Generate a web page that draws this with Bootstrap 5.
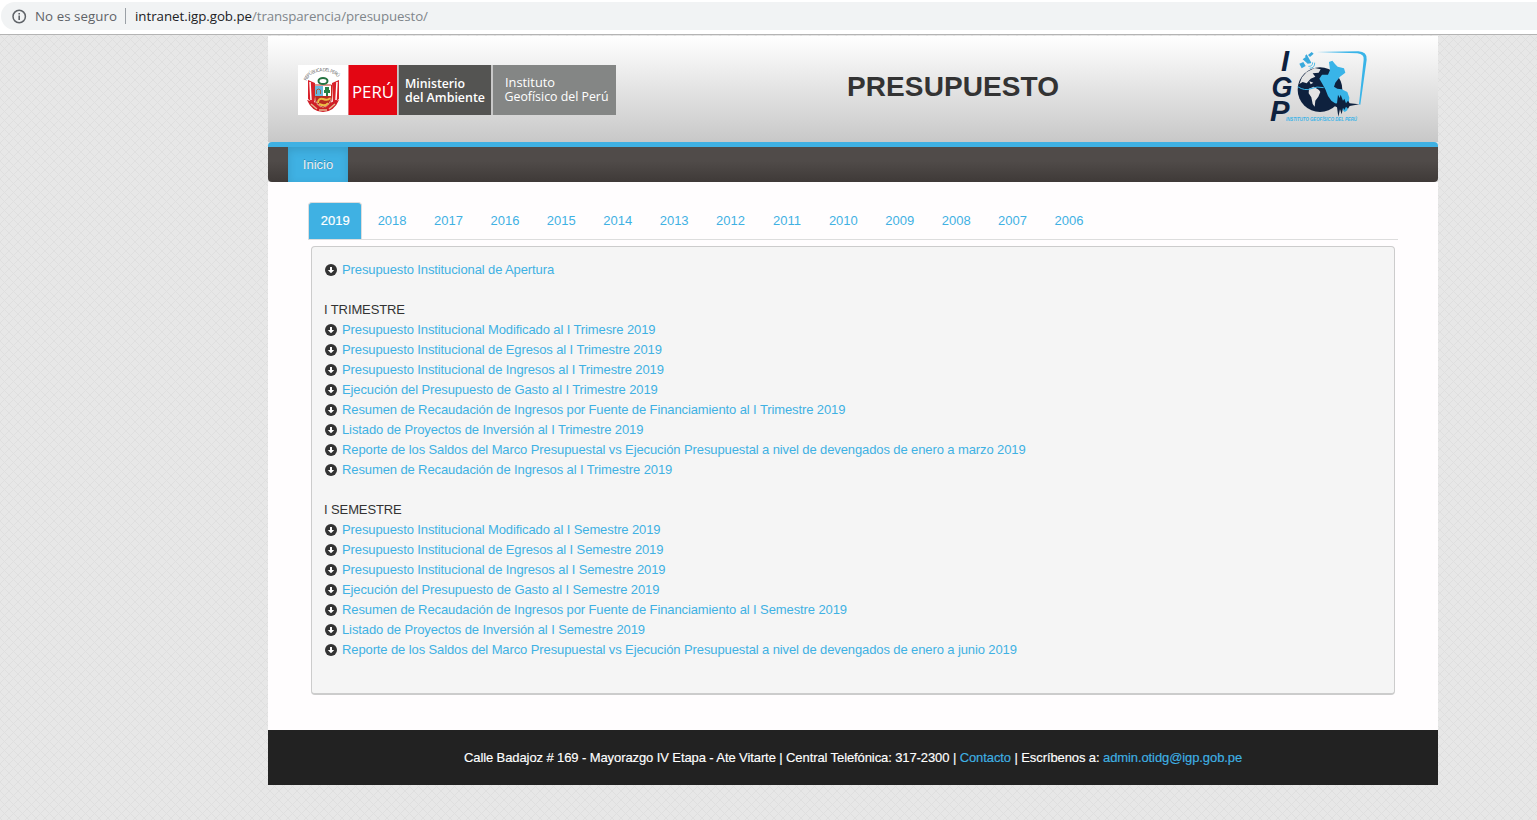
<!DOCTYPE html>
<html lang="es">
<head>
<meta charset="utf-8">
<title>Presupuesto</title>
<link rel="stylesheet" href="https://cdn.jsdelivr.net/npm/bootstrap@5.3.0/dist/css/bootstrap.min.css">
<style>
body{font:13px/20px "Liberation Sans",Arial,sans-serif;color:#333;height:820px;overflow:hidden;background:#e6e6e6}
a{color:#3fb1e3;text-decoration:none}
.address{height:35px;border-bottom:1px solid #b4b4b4;padding:2px 0 4px 1px}
.omnibox{height:28px;background:#f1f3f4;border-radius:14px 0 0 14px;padding-left:11px;color:#5f6368;font-family:"Open Sans","Noto Sans",sans-serif}
.mesh{height:785px;padding-top:1px;background:url("data:image/svg+xml,%3Csvg xmlns='http://www.w3.org/2000/svg' width='9' height='9'%3E%3Cpath d='M0 0L9 9M9 0L0 9' stroke='%23dfdfdf' stroke-width='1'/%3E%3C/svg%3E") #e7e7e7}
.page{width:1170px;margin-left:268px}
.masthead{height:106px;background:linear-gradient(#fff,#c8c8c8)}
.ministry{margin:29px 0 0 30px}
.masthead h1{font-size:28px;line-height:40px;font-weight:700;color:#333;letter-spacing:.1px;width:213px;margin:31px 0 0 231px}
.emblem{margin-left:200px}
.mainbar{height:40px;border-top:5px solid #3fb1e3;border-radius:4px;background:linear-gradient(#504b49 40%,#3f3a38);padding-left:20px}
.mainbar a{width:60px;height:35px;line-height:35px;background:#3fb1e3;color:#eee;text-align:center;text-shadow:0 -1px 0 rgba(0,0,0,.25);box-shadow:inset 0 3px 8px rgba(0,0,0,.125)}
.sheet{height:548px;background:#fffdfe;padding:20px 40px 0}
.years{height:38px;border-bottom:1px solid #ddd}
.years .nav-link{width:54.42px;margin-right:2px;height:37px;padding:0 0 0 1px;line-height:35px;text-align:center;color:#3fb1e3;border:1px solid transparent;border-bottom:0}
.years .nav-link.active{background:#3fb1e3;color:#fff;border-color:#ddd;border-radius:4px 4px 0 0;padding:0;-webkit-text-stroke:.2px}
.docs{margin:6px 3px 0;height:449px;background:#f5f5f5;border:1px solid #ccc;border-bottom-width:2px;border-radius:4px;padding:13px 12px;letter-spacing:-.109px}
.docs li{height:20px;white-space:nowrap}
.docs svg{width:14px;height:14px;margin-right:4px}
.foot{height:55px;background:#222;color:#fff;line-height:55px;text-align:center;letter-spacing:-.096px;-webkit-text-stroke:.15px}
svg{display:block;flex-shrink:0}
</style>
<script src="https://cdn.jsdelivr.net/npm/bootstrap@5.3.0/dist/js/bootstrap.bundle.min.js"></script>
</head>
<body>
<svg width="0" height="0" class="position-absolute"><defs>
<symbol id="down" viewBox="0 0 14 14"><circle cx="7" cy="7" r="6" fill="#333"/><path d="M6 4h2v3h2.2L7 10.3 3.8 7H6z" fill="#fff"/></symbol>
</defs></svg>
<div class="address bg-white">
 <div class="omnibox d-flex align-items-center">
  <svg width="15" height="15" viewBox="0 0 15 15"><circle cx="7.2" cy="7.5" r="6.2" fill="none" stroke="#5f6368" stroke-width="1.5"/><path d="M6.4 6.6H8V11H6.4zM6.4 4H8v1.5H6.4z" fill="#5f6368"/></svg>
  <svg width="405" height="28" font-size="13.3"><text x="8" y="18.7" textLength="82" fill="#5f6368">No es seguro</text><path d="M98.500 6v16" stroke="#9aa0a6"/><text x="108" y="18.700" textLength="117" fill="#202124">intranet.igp.gob.pe</text><text x="225" y="18.700" textLength="176" fill="#80868b">/transparencia/presupuesto/</text></svg>
 </div>
</div>
<div class="mesh">
<div class="page">
 <header class="masthead d-flex">
  <svg class="ministry" width="318" height="50" font-family="Open Sans,sans-serif">
   <path d="M0 0h50v50H0z" fill="#fff"/><path d="M50.500 0H99v50H50.500z" fill="#e30613"/><path d="M100.500 0H193v50h-92.500z" fill="#545452"/><path d="M193 0h2v50h-2zM99 0h1.500v50H99z" fill="#c8c8c8"/><path d="M195 0h123v50H195z" fill="#848685"/>
   <path id="motto" d="M8.500 16C13 3 37 3 42 16" fill="none"/>
   <text font-size="4.600" fill="#555"><textPath href="#motto" textLength="37">REPÚBLICA DEL PERÚ</textPath></text>
   <path d="M10 15l7 3-1 21-6-5zM41 15l-7 3 1 21 6-5z" fill="#d9202a"/><path d="M12 17l1 18M39 17l-1 18" stroke="#fff" stroke-width="1.500"/>
   <path d="M9 35q5 12 16 12t16-12l-7 2q-9 6-18 0z" fill="#cf1d26"/><path d="M13 39l6 5M37 39l-6 5M21 45h8" stroke="#e5b78e" stroke-width="1.500"/>
   <path d="M16.500 20h17v12q0 9-8.500 11-8.500-2-8.500-11z" fill="#fff" stroke="#c72b20"/>
   <path d="M17 21h8v10h-8z" fill="#68b8dd"/><path d="M17 31h16q0 9-8 11-8-2-8-11z" fill="#b92a20"/><path d="M27 22h4v3h1v3h-2v3h-2v-3h-2v-3h1z" fill="#258044"/><path d="M18.500 29v-4l2-1 2 1v4" fill="none" stroke="#9b6446"/>
   <path d="M20 38q0-5 5-4 5 2 7-1M21 39q6 3 9-1" stroke="#edbd45" fill="none" stroke-width="2"/>
   <ellipse cx="25" cy="16" rx="4.500" ry="3" fill="none" stroke="#257442" stroke-width="2"/>
   <g fill="#fff"><text x="54" y="32.500" font-size="17" textLength="42" lengthAdjust="spacingAndGlyphs">PERÚ</text>
   <g font-size="12.200" font-weight="600"><text x="107" y="23" textLength="60" lengthAdjust="spacingAndGlyphs">Ministerio</text><text x="107" y="36.500" textLength="80" lengthAdjust="spacingAndGlyphs">del Ambiente</text></g>
   <g font-size="12.200"><text x="207" y="22" textLength="50" lengthAdjust="spacingAndGlyphs">Instituto</text><text x="206.500" y="36" textLength="104" lengthAdjust="spacingAndGlyphs">Geofísico del Perú</text></g></g>
  </svg>
  <h1>PRESUPUESTO</h1>
  <svg class="emblem" width="120" height="100" viewBox="0 0 120 100">
   <g fill="#0e213e" font-family="Liberation Sans" font-size="29" font-weight="bold" font-style="italic"><text x="21" y="35">I</text><text x="11.500" y="60.500" textLength="21" lengthAdjust="spacingAndGlyphs">G</text><text x="10" y="85" textLength="19.500" lengthAdjust="spacingAndGlyphs">P</text></g>
   <g transform="scale(.33333)">
    <circle cx="180" cy="161" r="67" fill="#0e213e"/>
    <path d="M126 124l14-16 24-12 18 4-6 10-18 2 8 10-14 6-12 14-12-4-10 6zM148 136l12 4-8 5z" fill="#e4e4e4"/>
    <path d="M147 158l14-6 16 10 4 6-6 14-9 12-2 18-6-8-4-20-8-12z" fill="#e4e4e4"/>
    <path d="M113 152q22 14 40 6t38-3" fill="none" stroke="#39b4e8" stroke-width="3"/>
    <path d="M207 78l10-4 8 10 8 8 19 5 4 13-16 12-14 18-4 12 10 6 13 2 17 8 6 17-2 20-4 18-8 5-20-20-20-14-10-14-8-20-10-18-8-14 8-12 18 0 6-14z" fill="#39b4e8"/>
    <path d="M128 70l9-7 16 14-9 7zM144 57l11-9 6 5-11 10zM118 83l12-5 7 12-12 7zM135 60l5-5 14 25-5 3z" fill="#39a9dc"/>
    <path d="M145 91q13 1 13-12M149 97q16-1 15-17" fill="none" stroke="#55bce6" stroke-width="3"/>
    <path d="M170 48l125-2q27 1 25 25l-19 135-4-1 14-134q2-17-19-19z" fill="#39b4e8"/>
    <path d="M222 204l9-2 3-26 5 10 3-10 7 18 4-6 5 14 6-8 5 8 29 3-29 5-5 8-6-6-5 10-4-7-4 20-5-15-5 22-4-28-9-5z" fill="#0e213e"/>
   </g>
   <text x="26" y="85" font-family="Liberation Sans" font-size="5.200" font-style="italic" font-weight="bold" fill="#39b4e8" textLength="71" lengthAdjust="spacingAndGlyphs">INSTITUTO GEOFÍSICO DEL PERÚ</text>
  </svg>
 </header>
 <nav class="mainbar d-flex"><a href="#">Inicio</a></nav>
 <main class="sheet">
  <nav class="nav years flex-nowrap" id="years"></nav>
  <ul class="docs list-unstyled" id="docs"></ul>
 </main>
 <footer class="foot"><span>Calle Badajoz # 169 - Mayorazgo IV Etapa - Ate Vitarte | Central Telefónica: 317-2300 | <a href="#">Contacto</a> | Escríbenos a: <a href="#">admin.otidg@igp.gob.pe</a></span></footer>
</div>
</div>
<script>
for(let y=2019;y>=2006;y--)years.insertAdjacentHTML('beforeend',`<a href="#" class="nav-link flex-shrink-0 ${y==2019?'active':''}">${y}</a>`);
const section=p=>[`Presupuesto Institucional Modificado al I ${p=='Trimestre'?'Trimesre':p} 2019`,`Presupuesto Institucional de Egresos al I ${p} 2019`,`Presupuesto Institucional de Ingresos al I ${p} 2019`,`Ejecución del Presupuesto de Gasto al I ${p} 2019`,`Resumen de Recaudación de Ingresos por Fuente de Financiamiento al I ${p} 2019`,`Listado de Proyectos de Inversión al I ${p} 2019`,`Reporte de los Saldos del Marco Presupuestal vs Ejecución Presupuestal a nivel de devengados de enero a ${p=='Trimestre'?'marzo':'junio'} 2019`];
const rows=['Presupuesto Institucional de Apertura','','#I TRIMESTRE',...section('Trimestre'),'Resumen de Recaudación de Ingresos al I Trimestre 2019','','#I SEMESTRE',...section('Semestre')];
docs.innerHTML=rows.map(r=>r==''?'<li></li>':r[0]=='#'?`<li>${r.slice(1)}</li>`:`<li class="d-flex align-items-center"><svg><use href="#down"/></svg><a href="#">${r}</a></li>`).join('');
</script>
</body>
</html>
